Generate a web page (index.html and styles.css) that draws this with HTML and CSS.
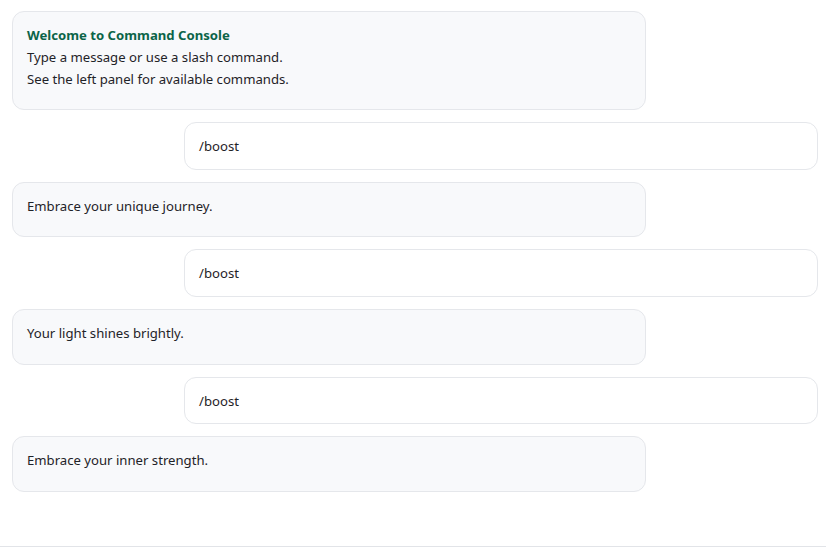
FILE: index.html
```html
<!DOCTYPE html>
<html lang="en">
<head>
<meta charset="utf-8">
<title>Command Console</title>
<link rel="stylesheet" href="styles.css">
</head>
<body>
<div class="console">
  <div class="messages">
    <div class="msg bot">
      <div class="title">Welcome to Command Console</div>
      <div>Type a message or use a slash command.</div>
      <div>See the left panel for available commands.</div>
    </div>
    <div class="msg user">/boost</div>
    <div class="msg bot">Embrace your unique journey.</div>
    <div class="msg user">/boost</div>
    <div class="msg bot">Your light shines brightly.</div>
    <div class="msg user">/boost</div>
    <div class="msg bot">Embrace your inner strength.</div>
  </div>
  <div class="composer"></div>
</div>
</body>
</html>
```

FILE: styles.css
```css
html, body {
  margin: 0;
  padding: 0;
  background: #ffffff;
}
body {
  font-family: "Noto Sans", "Liberation Sans", sans-serif;
  font-size: 13.15px;
  color: #1f2328;
}
.console {
  height: 549px;
  display: flex;
  flex-direction: column;
  overflow: hidden;
}
.messages {
  height: 546px;
  box-sizing: border-box;
  padding: 11px 8px 0 12px;
  display: flex;
  flex-direction: column;
  gap: 12px;
  overflow: hidden;
}
.msg {
  width: 78.66%;
  box-sizing: border-box;
  border: 1px solid #e5e7eb;
  border-radius: 12px;
  line-height: 21.75px;
}
.bot {
  align-self: flex-start;
  background: #f8f9fb;
  padding: 13px 14px 18.75px;
}
.user {
  align-self: flex-end;
  background: #ffffff;
  padding: 13px 14px 11px;
}
.title {
  font-weight: 700;
  color: #0b6448;
}
.composer {
  flex: 1;
  border-top: 1px solid #e2e4e8;
}
```
